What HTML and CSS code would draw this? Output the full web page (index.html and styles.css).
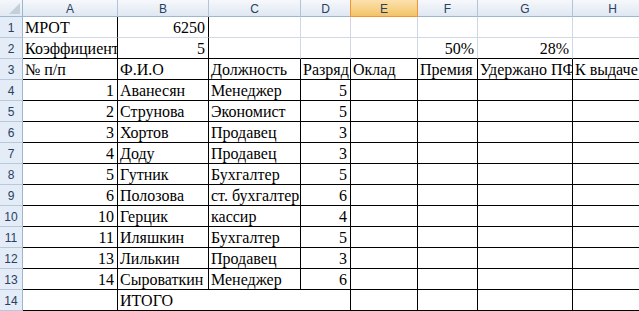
FILE: index.html
```html
<!DOCTYPE html>
<html lang="ru">
<head>
<meta charset="utf-8">
<link rel="stylesheet" href="styles.css">
</head>
<body>
<div class="sheet">
  <div class="corner"><span class="tri"></span></div>
  <div class="ch">A</div>
  <div class="ch">B</div>
  <div class="ch">C</div>
  <div class="ch">D</div>
  <div class="ch sel">E</div>
  <div class="ch">F</div>
  <div class="ch">G</div>
  <div class="ch">H</div>

  <div class="rh">1</div>
  <div class="c br">МРОТ</div>
  <div class="c r br">6250</div>
  <div class="c"></div><div class="c"></div><div class="c"></div><div class="c"></div><div class="c"></div><div class="c"></div>

  <div class="rh">2</div>
  <div class="c br bb">Коэффициент</div>
  <div class="c r br bb">5</div>
  <div class="c bb"></div><div class="c bb"></div><div class="c bb"></div>
  <div class="c r bb">50%</div>
  <div class="c r bb">28%</div>
  <div class="c bb"></div>

  <div class="rh">3</div>
  <div class="c k">№ п/п</div>
  <div class="c k">Ф.И.О</div>
  <div class="c k">Должность</div>
  <div class="c k">Разряд</div>
  <div class="c k">Оклад</div>
  <div class="c k">Премия</div>
  <div class="c k">Удержано ПФ</div>
  <div class="c k">К выдаче</div>

  <div class="rh">4</div>
  <div class="c k r">1</div><div class="c k">Аванесян</div><div class="c k">Менеджер</div><div class="c k r">5</div>
  <div class="c k"></div><div class="c k"></div><div class="c k"></div><div class="c k"></div>

  <div class="rh">5</div>
  <div class="c k r">2</div><div class="c k">Струнова</div><div class="c k">Экономист</div><div class="c k r">5</div>
  <div class="c k"></div><div class="c k"></div><div class="c k"></div><div class="c k"></div>

  <div class="rh">6</div>
  <div class="c k r">3</div><div class="c k">Хортов</div><div class="c k">Продавец</div><div class="c k r">3</div>
  <div class="c k"></div><div class="c k"></div><div class="c k"></div><div class="c k"></div>

  <div class="rh">7</div>
  <div class="c k r">4</div><div class="c k">Доду</div><div class="c k">Продавец</div><div class="c k r">3</div>
  <div class="c k"></div><div class="c k"></div><div class="c k"></div><div class="c k"></div>

  <div class="rh">8</div>
  <div class="c k r">5</div><div class="c k">Гутник</div><div class="c k">Бухгалтер</div><div class="c k r">5</div>
  <div class="c k"></div><div class="c k"></div><div class="c k"></div><div class="c k"></div>

  <div class="rh">9</div>
  <div class="c k r">6</div><div class="c k">Полозова</div><div class="c k">ст. бухгалтер</div><div class="c k r">6</div>
  <div class="c k"></div><div class="c k"></div><div class="c k"></div><div class="c k"></div>

  <div class="rh">10</div>
  <div class="c k r">10</div><div class="c k">Герцик</div><div class="c k">кассир</div><div class="c k r">4</div>
  <div class="c k"></div><div class="c k"></div><div class="c k"></div><div class="c k"></div>

  <div class="rh">11</div>
  <div class="c k r">11</div><div class="c k">Иляшкин</div><div class="c k">Бухгалтер</div><div class="c k r">5</div>
  <div class="c k"></div><div class="c k"></div><div class="c k"></div><div class="c k"></div>

  <div class="rh">12</div>
  <div class="c k r">13</div><div class="c k">Лилькин</div><div class="c k">Продавец</div><div class="c k r">3</div>
  <div class="c k"></div><div class="c k"></div><div class="c k"></div><div class="c k"></div>

  <div class="rh">13</div>
  <div class="c k r">14</div><div class="c k">Сыроваткин</div><div class="c k">Менеджер</div><div class="c k r">6</div>
  <div class="c k"></div><div class="c k"></div><div class="c k"></div><div class="c k"></div>

  <div class="rh">14</div>
  <div class="c k"></div>
  <div class="c bb merged">ИТОГО</div>
  <div class="c k"></div>
  <div class="c k"></div><div class="c k"></div><div class="c k"></div><div class="c k"></div>
</div>
</body>
</html>
```
FILE: styles.css
```css
html, body {
  margin: 0;
  padding: 0;
  background: #ffffff;
  overflow: hidden;
}

.sheet {
  display: grid;
  grid-template-columns: 23px 95px 91px 92px 50px 67px 60px 95px 80px;
  grid-template-rows: 17px repeat(14, 21px);
  width: 653px;
}

.sheet > div {
  box-sizing: border-box;
  overflow: hidden;
  white-space: nowrap;
}

.corner {
  background: linear-gradient(#f4f7fb, #e2e9f3);
  border-right: 1px solid #9eb6ce;
  border-bottom: 1px solid #9eb6ce;
  position: relative;
}

.tri {
  position: absolute;
  right: 2px;
  bottom: 2px;
  width: 0;
  height: 0;
  border-left: 11px solid transparent;
  border-bottom: 11px solid #c4cfdc;
}

.ch {
  background: linear-gradient(#f6f8fb 0%, #eaf0f7 50%, #dfe7f2 100%);
  border-right: 1px solid #b3c4d8;
  border-bottom: 1px solid #9eb6ce;
  font-family: "Liberation Sans", Arial, sans-serif;
  font-size: 12px;
  color: #27415f;
  display: flex;
  align-items: center;
  justify-content: center;
  padding-top: 1px;
}

.ch.sel {
  background: linear-gradient(#fbe1ad 0%, #f8d38c 50%, #f2c468 100%);
  border-right: 1px solid #f29436;
  border-left: 1px solid #f29436;
  border-bottom: 1px solid #f29436;
  margin-left: -1px;
}

.rh {
  background: #e4ecf7;
  border-right: 1px solid #9eb6ce;
  border-bottom: 1px solid #b9c9dc;
  font-family: "Liberation Sans", Arial, sans-serif;
  font-size: 12px;
  color: #27415f;
  display: flex;
  align-items: center;
  justify-content: center;
  padding-top: 2px;
}

.c {
  border-right: 1px solid #d0d7e5;
  border-bottom: 1px solid #d0d7e5;
  font-family: "Liberation Serif", "Times New Roman", serif;
  font-size: 16px;
  line-height: 18px;
  color: #000000;
  display: flex;
  align-items: flex-end;
  justify-content: flex-start;
  padding: 0 2px 0 2px;
}

.c.r {
  justify-content: flex-end;
  padding-right: 3px;
}

.c.br {
  border-right-color: #000000;
}

.c.bb {
  border-bottom-color: #000000;
}

.c.k {
  border-right-color: #000000;
  border-bottom-color: #000000;
}

.c.merged {
  grid-column: span 2;
  border-right: 0;
  overflow: visible;
}
```
